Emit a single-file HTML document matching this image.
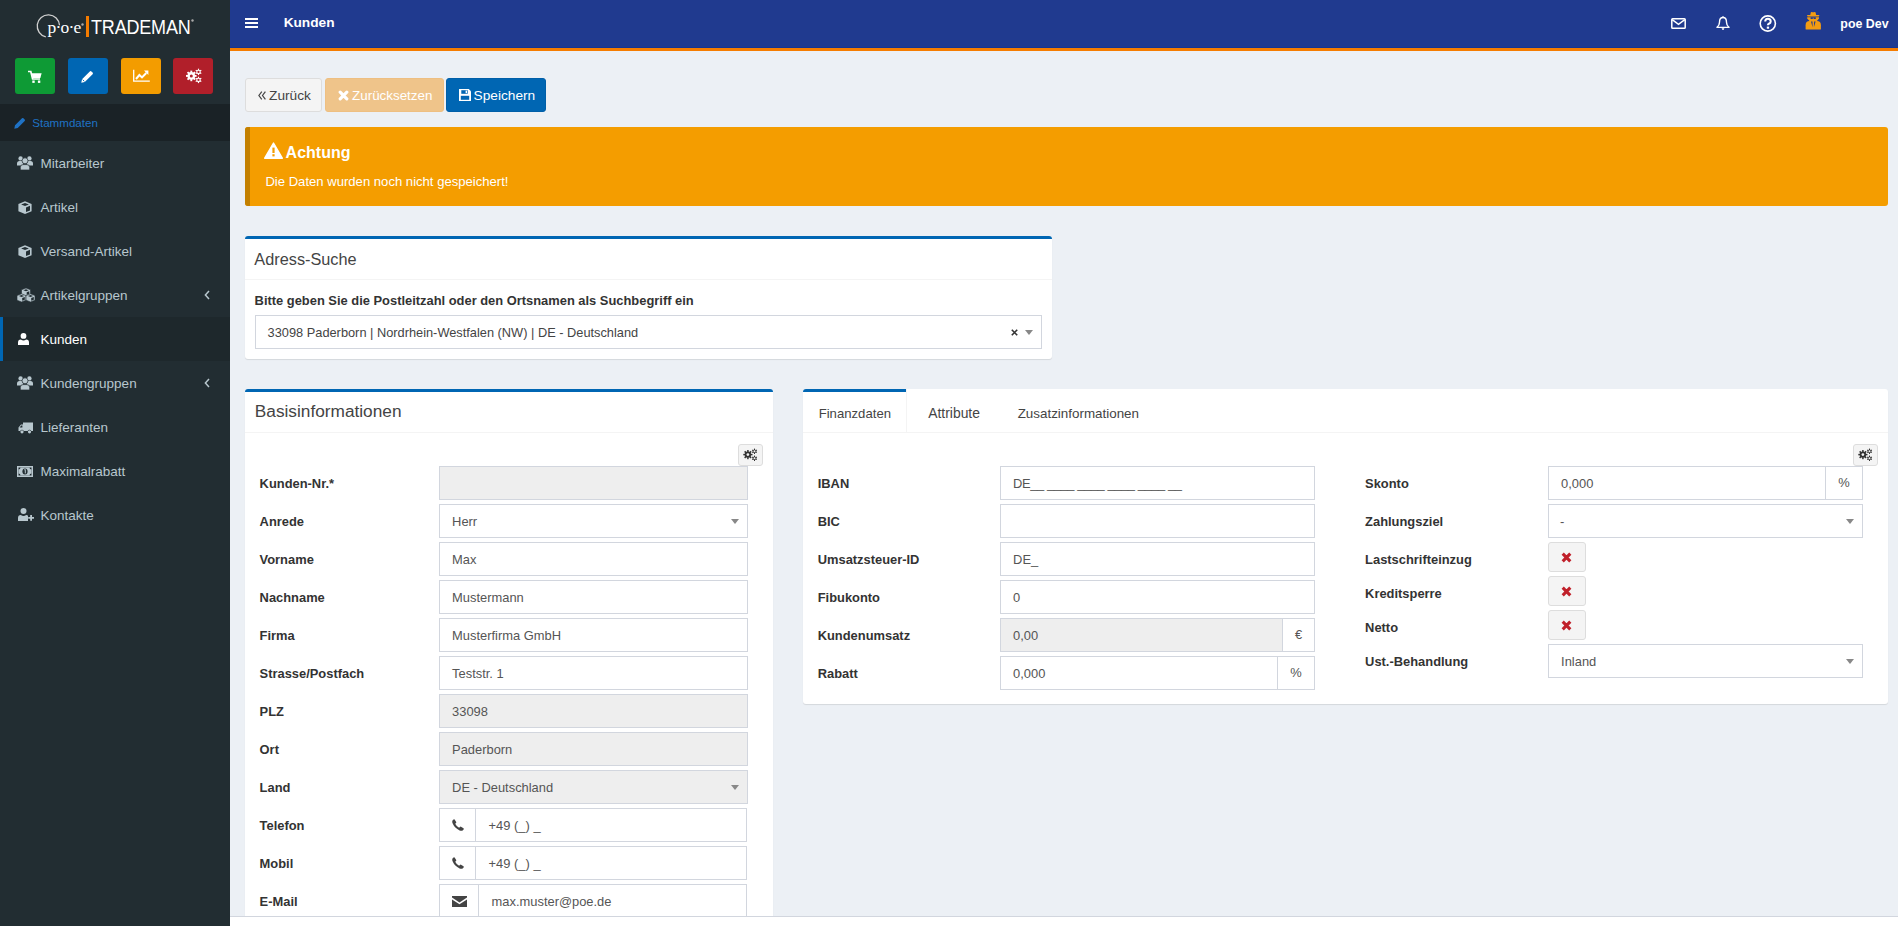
<!DOCTYPE html>
<html><head><meta charset="utf-8"><title>Kunden</title>
<style>
*{box-sizing:border-box;margin:0;padding:0}
html,body{width:1900px;height:926px;overflow:hidden;background:#fff;font-family:"Liberation Sans",sans-serif}
.abs{position:absolute}
.t{position:absolute;white-space:nowrap;line-height:1}
</style></head><body>
<div class="abs" style="left:0px;top:0px;width:230px;height:926px;background:#222d32"></div>
<svg class="abs" style="left:30px;top:8px" width="60" height="36" viewBox="0 0 60 36"><path d="M29.5 17.3 A11.15 11.15 0 1 0 15.8 28.8" fill="none" stroke="#d0d0d0" stroke-width="1.3"/></svg>
<div class="t" style="left:47.50px;top:19.19px;font-size:17.5px;color:#fff;font-weight:normal;font-family:'Liberation Serif',serif;letter-spacing:-0.8px">p·o·e</div>
<div class="abs" style="left:86px;top:16px;width:3px;height:21px;background:#f57c00"></div>
<div class="t" style="left:90.80px;top:16.77px;font-size:20px;color:#fff;font-weight:normal;transform:scaleX(0.9);transform-origin:0 0;letter-spacing:-0.2px">TRADEMAN</div>
<svg class="abs" style="left:191px;top:19px" width="3" height="3" viewBox="0 0 3 3"><circle cx="1.5" cy="1.5" r="1.2" fill="#aaa"/></svg>
<svg class="abs" style="left:81px;top:23px" width="3" height="3" viewBox="0 0 3 3"><circle cx="1.5" cy="1.5" r="1.2" fill="#aaa"/></svg>
<div class="abs" style="left:15px;top:58px;width:40px;height:36px;background:#0e9a35;border-radius:3px"></div>
<svg class="abs" style="left:28px;top:70px" width="14" height="14" viewBox="0 0 14 14"><path d="M0 1.5 H2.8 L4.6 9 H12" fill="none" stroke="#fff" stroke-width="1.7"/><path d="M3.6 3.2 H13.6 L12.4 8 H4.7Z" fill="#fff"/><rect x="4.3" y="10.5" width="2.4" height="2.4" fill="#fff"/><rect x="9.9" y="10.5" width="2.4" height="2.4" fill="#fff"/></svg>
<div class="abs" style="left:68px;top:58px;width:40px;height:36px;background:#0066b3;border-radius:3px"></div>
<svg class="abs" style="left:81px;top:70px" width="13" height="13" viewBox="0 0 13 13"><path d="M0.3 12.7 L1 9.2 L8.8 1.4 Q9.6 0.6 10.4 1.4 L11.6 2.6 Q12.4 3.4 11.6 4.2 L3.8 12Z" fill="#fff"/><path d="M1.6 9.6 L3.4 11.4" stroke="#0066b3" stroke-width="0.9"/></svg>
<div class="abs" style="left:121px;top:58px;width:40px;height:36px;background:#f39c00;border-radius:3px"></div>
<svg class="abs" style="left:133px;top:69px" width="17" height="14" viewBox="0 0 17 14"><path d="M0.7 0.8 V12.1 H16.8" fill="none" stroke="#fff" stroke-width="1.3"/><path d="M3 10 L6.4 6 L9 8.4 L13.3 4" fill="none" stroke="#fff" stroke-width="2"/><path d="M11 1.6 H15.4 V6Z" fill="#fff"/></svg>
<div class="abs" style="left:173px;top:58px;width:40px;height:36px;background:#b11f2a;border-radius:3px"></div>
<svg class="abs" style="left:184px;top:67px" width="19" height="17" viewBox="0 0 19 17"><circle cx="7.3" cy="8.9" r="3.8" fill="#fff"/><rect x="6.35" y="3.60" width="1.9" height="2.10" fill="#fff" transform="rotate(0.0 7.3 8.9)"/><rect x="6.35" y="3.60" width="1.9" height="2.10" fill="#fff" transform="rotate(45.0 7.3 8.9)"/><rect x="6.35" y="3.60" width="1.9" height="2.10" fill="#fff" transform="rotate(90.0 7.3 8.9)"/><rect x="6.35" y="3.60" width="1.9" height="2.10" fill="#fff" transform="rotate(135.0 7.3 8.9)"/><rect x="6.35" y="3.60" width="1.9" height="2.10" fill="#fff" transform="rotate(180.0 7.3 8.9)"/><rect x="6.35" y="3.60" width="1.9" height="2.10" fill="#fff" transform="rotate(225.0 7.3 8.9)"/><rect x="6.35" y="3.60" width="1.9" height="2.10" fill="#fff" transform="rotate(270.0 7.3 8.9)"/><rect x="6.35" y="3.60" width="1.9" height="2.10" fill="#fff" transform="rotate(315.0 7.3 8.9)"/><circle cx="7.3" cy="8.9" r="1.5" fill="#b11f2a"/><circle cx="14.5" cy="4.9" r="2.2" fill="#fff"/><rect x="13.90" y="1.70" width="1.2" height="1.60" fill="#fff" transform="rotate(0.0 14.5 4.9)"/><rect x="13.90" y="1.70" width="1.2" height="1.60" fill="#fff" transform="rotate(60.0 14.5 4.9)"/><rect x="13.90" y="1.70" width="1.2" height="1.60" fill="#fff" transform="rotate(120.0 14.5 4.9)"/><rect x="13.90" y="1.70" width="1.2" height="1.60" fill="#fff" transform="rotate(180.0 14.5 4.9)"/><rect x="13.90" y="1.70" width="1.2" height="1.60" fill="#fff" transform="rotate(240.0 14.5 4.9)"/><rect x="13.90" y="1.70" width="1.2" height="1.60" fill="#fff" transform="rotate(300.0 14.5 4.9)"/><circle cx="14.5" cy="4.9" r="1.15" fill="#b11f2a"/><circle cx="14.5" cy="12.9" r="2.2" fill="#fff"/><rect x="13.90" y="9.70" width="1.2" height="1.60" fill="#fff" transform="rotate(0.0 14.5 12.9)"/><rect x="13.90" y="9.70" width="1.2" height="1.60" fill="#fff" transform="rotate(60.0 14.5 12.9)"/><rect x="13.90" y="9.70" width="1.2" height="1.60" fill="#fff" transform="rotate(120.0 14.5 12.9)"/><rect x="13.90" y="9.70" width="1.2" height="1.60" fill="#fff" transform="rotate(180.0 14.5 12.9)"/><rect x="13.90" y="9.70" width="1.2" height="1.60" fill="#fff" transform="rotate(240.0 14.5 12.9)"/><rect x="13.90" y="9.70" width="1.2" height="1.60" fill="#fff" transform="rotate(300.0 14.5 12.9)"/><circle cx="14.5" cy="12.9" r="1.15" fill="#b11f2a"/></svg>
<div class="abs" style="left:0px;top:104px;width:230px;height:37px;background:#1a2226"></div>
<svg class="abs" style="left:14px;top:117px" width="12" height="12" viewBox="0 0 12 12"><path d="M0.3 11.7 L1 8.3 L8 1.3 Q8.7 0.6 9.4 1.3 L10.7 2.6 Q11.4 3.3 10.7 4 L3.7 11Z" fill="#1f72c4"/></svg>
<div class="t" style="left:32.19px;top:117.38px;font-size:11.6px;color:#1f72c4;font-weight:normal;">Stammdaten</div>
<div class="t" style="left:40.55px;top:157.37px;font-size:13.5px;color:#b8c7ce;font-weight:normal;">Mitarbeiter</div>
<div class="t" style="left:40.55px;top:201.37px;font-size:13.5px;color:#b8c7ce;font-weight:normal;">Artikel</div>
<div class="t" style="left:40.55px;top:245.37px;font-size:13.5px;color:#b8c7ce;font-weight:normal;">Versand-Artikel</div>
<div class="t" style="left:40.55px;top:289.37px;font-size:13.5px;color:#b8c7ce;font-weight:normal;">Artikelgruppen</div>
<div class="abs" style="left:0px;top:317px;width:230px;height:44px;background:#1e282c"></div>
<div class="abs" style="left:0px;top:317px;width:3px;height:44px;background:#0066b3"></div>
<div class="t" style="left:40.55px;top:333.37px;font-size:13.5px;color:#fff;font-weight:normal;">Kunden</div>
<div class="t" style="left:40.55px;top:377.37px;font-size:13.5px;color:#b8c7ce;font-weight:normal;">Kundengruppen</div>
<div class="t" style="left:40.55px;top:421.37px;font-size:13.5px;color:#b8c7ce;font-weight:normal;">Lieferanten</div>
<div class="t" style="left:40.55px;top:465.37px;font-size:13.5px;color:#b8c7ce;font-weight:normal;">Maximalrabatt</div>
<div class="t" style="left:40.55px;top:509.37px;font-size:13.5px;color:#b8c7ce;font-weight:normal;">Kontakte</div>
<svg class="abs" style="left:17px;top:156px" width="16" height="14" viewBox="0 0 16 14"><circle cx="3.6" cy="2.4" r="2.2" fill="#b8c7ce"/><circle cx="12.4" cy="2.4" r="2.2" fill="#b8c7ce"/><path d="M0 9.5 V7.5 Q0 5 2.5 5 H4.8 Q6 5 6 7 V9.5Z" fill="#b8c7ce"/><path d="M16 9.5 V7.5 Q16 5 13.5 5 H11.2 Q10 5 10 7 V9.5Z" fill="#b8c7ce"/><circle cx="8" cy="4.8" r="3" fill="#b8c7ce" stroke="#222d32" stroke-width="0.7"/><path d="M3.3 14 V11.5 Q3.3 8.6 6 8.6 H10 Q12.7 8.6 12.7 11.5 V14Z" fill="#b8c7ce" stroke="#222d32" stroke-width="0.7"/></svg>
<svg class="abs" style="left:18px;top:201px" width="14" height="13" viewBox="0 0 14 13"><path d="M7 0.2 L13.6 2.9 V10.2 L7 12.9 L0.4 10.2 V2.9Z" fill="#b8c7ce"/><path d="M7 1.9 L10.9 3.4 L7 4.9 L3.1 3.4Z" fill="#222d32"/><path d="M8 6.4 L12 4.8 V9.4 L8 11Z" fill="#222d32"/></svg>
<svg class="abs" style="left:18px;top:245px" width="14" height="13" viewBox="0 0 14 13"><path d="M7 0.2 L13.6 2.9 V10.2 L7 12.9 L0.4 10.2 V2.9Z" fill="#b8c7ce"/><path d="M7 1.9 L10.9 3.4 L7 4.9 L3.1 3.4Z" fill="#222d32"/><path d="M8 6.4 L12 4.8 V9.4 L8 11Z" fill="#222d32"/></svg>
<svg class="abs" style="left:17px;top:288px" width="18" height="14" viewBox="0 0 18 14"><path d="M9.0 0 L13.5 1.8 V6.4 L9.0 8.2 L4.5 6.4 V1.8Z" fill="#b8c7ce" stroke="#222d32" stroke-width="0.6"/><path d="M9.0 1.2 L11.6 2.2 L9.0 3.2 L6.4 2.2Z" fill="#222d32"/><path d="M9.7 4.3 L12.3 3.3 V6 L9.7 7Z" fill="#222d32"/><path d="M4.5 5.8 L9 7.6 V12.2 L4.5 14.0 L0 12.2 V7.6Z" fill="#b8c7ce" stroke="#222d32" stroke-width="0.6"/><path d="M4.5 7.0 L7.1 8.0 L4.5 9.0 L1.9 8.0Z" fill="#222d32"/><path d="M5.2 10.1 L7.8 9.1 V11.8 L5.2 12.8Z" fill="#222d32"/><path d="M13.5 5.8 L18 7.6 V12.2 L13.5 14.0 L9 12.2 V7.6Z" fill="#b8c7ce" stroke="#222d32" stroke-width="0.6"/><path d="M13.5 7.0 L16.1 8.0 L13.5 9.0 L10.9 8.0Z" fill="#222d32"/><path d="M14.2 10.1 L16.8 9.1 V11.8 L14.2 12.8Z" fill="#222d32"/></svg>
<svg class="abs" style="left:18px;top:333px" width="11" height="12" viewBox="0 0 11 12"><circle cx="5.5" cy="2.9" r="2.9" fill="#fff"/><path d="M0 12 V9.5 Q0 6.5 2.8 6.5 Q5.5 8.3 8.2 6.5 Q11 6.5 11 9.5 V12Z" fill="#fff"/></svg>
<svg class="abs" style="left:17px;top:376px" width="16" height="14" viewBox="0 0 16 14"><circle cx="3.6" cy="2.4" r="2.2" fill="#b8c7ce"/><circle cx="12.4" cy="2.4" r="2.2" fill="#b8c7ce"/><path d="M0 9.5 V7.5 Q0 5 2.5 5 H4.8 Q6 5 6 7 V9.5Z" fill="#b8c7ce"/><path d="M16 9.5 V7.5 Q16 5 13.5 5 H11.2 Q10 5 10 7 V9.5Z" fill="#b8c7ce"/><circle cx="8" cy="4.8" r="3" fill="#b8c7ce" stroke="#222d32" stroke-width="0.7"/><path d="M3.3 14 V11.5 Q3.3 8.6 6 8.6 H10 Q12.7 8.6 12.7 11.5 V14Z" fill="#b8c7ce" stroke="#222d32" stroke-width="0.7"/></svg>
<svg class="abs" style="left:18px;top:422px" width="15" height="12" viewBox="0 0 15 12"><path d="M5 0.5 H15 V9 H13.3 A2 2 0 0 0 9.7 9 H5.8 A2 2 0 0 0 2.2 9 H0.5 V5.5 L3 2.5 H5Z" fill="#b8c7ce"/><path d="M1.6 5.5 L3.3 3.5 H4.4 V5.5Z" fill="#222d32"/><circle cx="4" cy="9.8" r="1.6" fill="#b8c7ce"/><circle cx="11.5" cy="9.8" r="1.6" fill="#b8c7ce"/></svg>
<svg class="abs" style="left:17px;top:466px" width="16" height="11" viewBox="0 0 16 11"><rect x="0" y="0" width="16" height="11" fill="#b8c7ce"/><rect x="1.5" y="1.5" width="13" height="8" fill="#222d32"/><path d="M3.5 1.5 Q3.5 3.5 1.5 3.5 V7.5 Q3.5 7.5 3.5 9.5 H12.5 Q12.5 7.5 14.5 7.5 V3.5 Q12.5 3.5 12.5 1.5Z" fill="#b8c7ce"/><ellipse cx="8" cy="5.5" rx="2.6" ry="3" fill="#222d32"/><path d="M7.3 3.8 L8.3 3.5 V7.4" stroke="#b8c7ce" stroke-width="1" fill="none"/></svg>
<svg class="abs" style="left:18px;top:508px" width="16" height="13" viewBox="0 0 16 13"><circle cx="5.5" cy="3" r="3" fill="#b8c7ce"/><path d="M0 13 V10 Q0 7 2.8 7 Q5.5 8.8 8.2 7 Q9.5 7 10 7.8 V13Z" fill="#b8c7ce"/><path d="M10.2 9.8 H16 M13.1 6.9 V12.7" stroke="#b8c7ce" stroke-width="1.8"/></svg>
<svg class="abs" style="left:204px;top:290px" width="6" height="10" viewBox="0 0 6 10"><path d="M5 1 L1.4 5 L5 9" fill="none" stroke="#b8c7ce" stroke-width="1.5"/></svg>
<svg class="abs" style="left:204px;top:378px" width="6" height="10" viewBox="0 0 6 10"><path d="M5 1 L1.4 5 L5 9" fill="none" stroke="#b8c7ce" stroke-width="1.5"/></svg>
<div class="abs" style="left:230px;top:0px;width:1668px;height:926px;background:#ecf0f5"></div>
<div class="abs" style="left:230px;top:0px;width:1668px;height:48px;background:#203a8f"></div>
<div class="abs" style="left:230px;top:47px;width:1668px;height:1px;background:#163591"></div>
<div class="abs" style="left:230px;top:48px;width:1668px;height:3px;background:#f57c00"></div>
<svg class="abs" style="left:245px;top:18px" width="13" height="10" viewBox="0 0 13 10"><path d="M0 1 H13 M0 5 H13 M0 9 H13" stroke="#fff" stroke-width="2"/></svg>
<div class="t" style="left:283.64px;top:16.30px;font-size:13.7px;color:#fff;font-weight:bold;">Kunden</div>
<svg class="abs" style="left:1671px;top:18px" width="15" height="11" viewBox="0 0 15 11"><rect x="0.8" y="0.8" width="13.4" height="9.4" rx="0.8" fill="none" stroke="#fff" stroke-width="1.5"/><path d="M1.2 1.6 L7.5 6.4 L13.8 1.6" fill="none" stroke="#fff" stroke-width="1.4"/></svg>
<svg class="abs" style="left:1716px;top:16px" width="14" height="14" viewBox="0 0 14 14"><path d="M7 1.5 C4.2 1.5 3.5 3.8 3.5 6.2 C3.5 9 2.5 10.2 1 11.4 H13 C11.5 10.2 10.5 9 10.5 6.2 C10.5 3.8 9.8 1.5 7 1.5Z" fill="none" stroke="#fff" stroke-width="1.4" stroke-linejoin="round"/><circle cx="7" cy="1.2" r="1" fill="#fff"/><path d="M5.6 12.2 H8.4 Q8.2 14 7 14 Q5.8 14 5.6 12.2Z" fill="#fff"/></svg>
<svg class="abs" style="left:1759px;top:15px" width="18" height="17" viewBox="0 0 18 17"><circle cx="8.8" cy="8.5" r="7.6" fill="none" stroke="#fff" stroke-width="1.6"/><path d="M6.2 6.6 Q6.2 3.8 8.9 3.8 Q11.7 3.8 11.7 6.4 Q11.7 8 9.9 8.7 Q8.9 9.2 8.9 10.3" fill="none" stroke="#fff" stroke-width="2"/><rect x="7.8" y="11.6" width="2.3" height="2.1" fill="#fff"/></svg>
<svg class="abs" style="left:1800px;top:8px" width="26" height="26" viewBox="0 0 26 26"><path d="M10.2 7.2 L10.8 4.6 Q11 3.8 11.9 4 Q13.2 4.4 14.5 4 Q15.4 3.8 15.6 4.6 L16.2 7.2Z" fill="#f39c12"/><path d="M7 7.6 Q7 6.9 7.8 6.9 H18.6 Q19.4 6.9 19.4 7.6 Q19.4 8.4 18.6 8.4 H7.8 Q7 8.4 7 7.6Z" fill="#f39c12"/><path d="M7.2 9.2 H19 V10.4 Q18.4 11.6 17.2 12.4 V13.4 H9.2 V12.4 Q8 11.6 7.2 10.4Z" fill="#f39c12"/><path d="M10.6 9.3 H12.8 V10.9 H10.6Z M13.6 9.3 H15.8 V10.9 H13.6Z M12.6 9.5 H13.8 V9.9 H12.6Z" fill="#203a8f"/><path d="M5.6 21 V17.2 Q5.6 13 9.6 13 H16.9 Q20.9 13 20.9 17.2 V21 Q20.9 21.5 20.3 21.5 H6.2 Q5.6 21.5 5.6 21Z" fill="#f39c12"/><path d="M11 13.6 H12.5 L12.6 19.3Z M14.1 13.6 H15.6 L13.9 19.3Z" fill="#203a8f"/></svg>
<div class="t" style="left:1840.33px;top:18.40px;font-size:12.4px;color:#fff;font-weight:bold;">poe Dev</div>
<div class="abs" style="left:245px;top:78px;width:77px;height:34px;background:#f4f4f4;border:1px solid #ddd;border-radius:3px"></div>
<svg class="abs" style="left:258px;top:91px" width="8" height="9" viewBox="0 0 8 9"><path d="M3.8 0.6 L0.9 4.5 L3.8 8.4 M7.4 0.6 L4.5 4.5 L7.4 8.4" fill="none" stroke="#444" stroke-width="1.2"/></svg>
<div class="t" style="left:269.04px;top:88.80px;font-size:13.7px;color:#444;font-weight:normal;">Zurück</div>
<div class="abs" style="left:325px;top:78px;width:119px;height:34px;background:#efc48a;border:1px solid #eebf82;border-radius:3px"></div>
<svg class="abs" style="left:338px;top:90px" width="11" height="11" viewBox="0 0 11 11"><path d="M2.2 2.2 L8.8 8.8 M8.8 2.2 L2.2 8.8" stroke="#fff" stroke-width="3.2" stroke-linecap="round"/></svg>
<div class="t" style="left:352.06px;top:89.06px;font-size:13.4px;color:#fff;font-weight:normal;">Zurücksetzen</div>
<div class="abs" style="left:446px;top:78px;width:100px;height:34px;background:#0066b3;border:1px solid #005fa8;border-radius:3px"></div>
<svg class="abs" style="left:459px;top:89px" width="12" height="12" viewBox="0 0 12 12"><path d="M0 0 H9.8 L12 2.2 V12 H0Z" fill="#fff"/><rect x="2.3" y="1.2" width="6.4" height="3.6" fill="#0066b3"/><rect x="6.6" y="1.6" width="1.4" height="2.6" fill="#fff"/><rect x="1.8" y="6.8" width="8.4" height="4" fill="#0066b3"/></svg>
<div class="t" style="left:473.54px;top:88.80px;font-size:13.7px;color:#fff;font-weight:normal;">Speichern</div>
<div class="abs" style="left:245px;top:127px;width:1643px;height:79px;background:#f49d00;border-radius:3px"></div>
<div class="abs" style="left:245px;top:127px;width:5px;height:79px;background:#c38000;border-radius:3px 0 0 3px"></div>
<svg class="abs" style="left:264px;top:142px" width="19" height="17" viewBox="0 0 19 17"><path d="M9.5 1 L18.3 16.2 H0.7Z" fill="#fff" stroke="#fff" stroke-width="1.4" stroke-linejoin="round"/><rect x="8.4" y="5.6" width="2.2" height="5.4" fill="#f49d00"/><rect x="8.4" y="12.2" width="2.2" height="2.2" fill="#f49d00"/></svg>
<div class="t" style="left:285.58px;top:145.26px;font-size:16.0px;color:#fff;font-weight:bold;">Achtung</div>
<div class="t" style="left:265.38px;top:175.01px;font-size:13.1px;color:#fff;font-weight:normal;">Die Daten wurden noch nicht gespeichert!</div>
<div class="abs" style="left:245px;top:236px;width:807px;height:123px;background:#fff;border-radius:3px;box-shadow:0 1px 1px rgba(0,0,0,0.1)"></div>
<div class="abs" style="left:245px;top:236px;width:807px;height:3px;background:#0066b3;border-radius:3px 3px 0 0"></div>
<div class="abs" style="left:245px;top:279px;width:807px;height:1px;background:#f4f4f4"></div>
<div class="t" style="left:254.36px;top:250.90px;font-size:16.3px;color:#444;font-weight:normal;">Adress-Suche</div>
<div class="t" style="left:254.60px;top:294.68px;font-size:12.9px;color:#333;font-weight:bold;">Bitte geben Sie die Postleitzahl oder den Ortsnamen als Suchbegriff ein</div>
<div class="abs" style="left:255px;top:315px;width:787px;height:34px;background:#fff;border:1px solid #d2d6de"></div>
<div class="t" style="left:267.60px;top:326.76px;font-size:12.8px;color:#444;font-weight:normal;">33098 Paderborn | Nordrhein-Westfalen (NW) | DE - Deutschland</div>
<svg class="abs" style="left:1011px;top:329px" width="7" height="7" viewBox="0 0 7 7"><path d="M0.8 0.8 L6.2 6.2 M6.2 0.8 L0.8 6.2" stroke="#333" stroke-width="1.6"/></svg>
<svg class="abs" style="left:1025px;top:330px" width="8" height="5" viewBox="0 0 8 5"><path d="M0 0 H8 L4 5Z" fill="#888"/></svg>
<div class="abs" style="left:245px;top:389px;width:528px;height:560px;background:#fff;border-radius:3px;box-shadow:0 1px 1px rgba(0,0,0,0.1)"></div>
<div class="abs" style="left:245px;top:389px;width:528px;height:3px;background:#0066b3;border-radius:3px 3px 0 0"></div>
<div class="abs" style="left:245px;top:432px;width:528px;height:1px;background:#f4f4f4"></div>
<div class="t" style="left:254.79px;top:402.90px;font-size:17.25px;color:#444;font-weight:normal;">Basisinformationen</div>
<div class="abs" style="left:738px;top:444px;width:25px;height:22px;background:#f4f4f4;border:1px solid #ddd;border-radius:3px"></div>
<svg class="abs" style="left:741px;top:444px" width="18" height="20" viewBox="0 0 18 20"><circle cx="6.9" cy="10.6" r="3.2" fill="#333"/><rect x="6.15" y="6.00" width="1.5" height="2.00" fill="#333" transform="rotate(0.0 6.9 10.6)"/><rect x="6.15" y="6.00" width="1.5" height="2.00" fill="#333" transform="rotate(45.0 6.9 10.6)"/><rect x="6.15" y="6.00" width="1.5" height="2.00" fill="#333" transform="rotate(90.0 6.9 10.6)"/><rect x="6.15" y="6.00" width="1.5" height="2.00" fill="#333" transform="rotate(135.0 6.9 10.6)"/><rect x="6.15" y="6.00" width="1.5" height="2.00" fill="#333" transform="rotate(180.0 6.9 10.6)"/><rect x="6.15" y="6.00" width="1.5" height="2.00" fill="#333" transform="rotate(225.0 6.9 10.6)"/><rect x="6.15" y="6.00" width="1.5" height="2.00" fill="#333" transform="rotate(270.0 6.9 10.6)"/><rect x="6.15" y="6.00" width="1.5" height="2.00" fill="#333" transform="rotate(315.0 6.9 10.6)"/><circle cx="6.9" cy="10.6" r="1.35" fill="#f4f4f4"/><circle cx="13.5" cy="7.3" r="1.8" fill="#333"/><rect x="13.00" y="4.60" width="1.0" height="1.50" fill="#333" transform="rotate(0.0 13.5 7.3)"/><rect x="13.00" y="4.60" width="1.0" height="1.50" fill="#333" transform="rotate(60.0 13.5 7.3)"/><rect x="13.00" y="4.60" width="1.0" height="1.50" fill="#333" transform="rotate(120.0 13.5 7.3)"/><rect x="13.00" y="4.60" width="1.0" height="1.50" fill="#333" transform="rotate(180.0 13.5 7.3)"/><rect x="13.00" y="4.60" width="1.0" height="1.50" fill="#333" transform="rotate(240.0 13.5 7.3)"/><rect x="13.00" y="4.60" width="1.0" height="1.50" fill="#333" transform="rotate(300.0 13.5 7.3)"/><circle cx="13.5" cy="7.3" r="1.05" fill="#f4f4f4"/><circle cx="13.5" cy="14.3" r="1.8" fill="#333"/><rect x="13.00" y="11.60" width="1.0" height="1.50" fill="#333" transform="rotate(0.0 13.5 14.3)"/><rect x="13.00" y="11.60" width="1.0" height="1.50" fill="#333" transform="rotate(60.0 13.5 14.3)"/><rect x="13.00" y="11.60" width="1.0" height="1.50" fill="#333" transform="rotate(120.0 13.5 14.3)"/><rect x="13.00" y="11.60" width="1.0" height="1.50" fill="#333" transform="rotate(180.0 13.5 14.3)"/><rect x="13.00" y="11.60" width="1.0" height="1.50" fill="#333" transform="rotate(240.0 13.5 14.3)"/><rect x="13.00" y="11.60" width="1.0" height="1.50" fill="#333" transform="rotate(300.0 13.5 14.3)"/><circle cx="13.5" cy="14.3" r="1.05" fill="#f4f4f4"/></svg>
<div class="t" style="left:259.60px;top:477.88px;font-size:12.9px;color:#333;font-weight:bold;">Kunden-Nr.*</div>
<div class="t" style="left:259.60px;top:515.88px;font-size:12.9px;color:#333;font-weight:bold;">Anrede</div>
<div class="t" style="left:259.60px;top:553.88px;font-size:12.9px;color:#333;font-weight:bold;">Vorname</div>
<div class="t" style="left:259.60px;top:591.88px;font-size:12.9px;color:#333;font-weight:bold;">Nachname</div>
<div class="t" style="left:259.60px;top:629.88px;font-size:12.9px;color:#333;font-weight:bold;">Firma</div>
<div class="t" style="left:259.60px;top:667.88px;font-size:12.9px;color:#333;font-weight:bold;">Strasse/Postfach</div>
<div class="t" style="left:259.60px;top:705.88px;font-size:12.9px;color:#333;font-weight:bold;">PLZ</div>
<div class="t" style="left:259.60px;top:743.88px;font-size:12.9px;color:#333;font-weight:bold;">Ort</div>
<div class="t" style="left:259.60px;top:781.88px;font-size:12.9px;color:#333;font-weight:bold;">Land</div>
<div class="t" style="left:259.60px;top:819.88px;font-size:12.9px;color:#333;font-weight:bold;">Telefon</div>
<div class="t" style="left:259.60px;top:857.88px;font-size:12.9px;color:#333;font-weight:bold;">Mobil</div>
<div class="t" style="left:259.60px;top:895.88px;font-size:12.9px;color:#333;font-weight:bold;">E-Mail</div>
<div class="abs" style="left:439px;top:466px;width:309px;height:34px;background:#eee;border:1px solid #d2d6de"></div>
<div class="abs" style="left:439px;top:504px;width:309px;height:34px;background:#fff;border:1px solid #d2d6de"></div>
<div class="t" style="left:452.10px;top:515.88px;font-size:12.9px;color:#555;font-weight:normal;">Herr</div>
<svg class="abs" style="left:731px;top:519px" width="8" height="5" viewBox="0 0 8 5"><path d="M0 0 H8 L4 5Z" fill="#888"/></svg>
<div class="abs" style="left:439px;top:542px;width:309px;height:34px;background:#fff;border:1px solid #d2d6de"></div>
<div class="t" style="left:452.10px;top:553.88px;font-size:12.9px;color:#555;font-weight:normal;">Max</div>
<div class="abs" style="left:439px;top:580px;width:309px;height:34px;background:#fff;border:1px solid #d2d6de"></div>
<div class="t" style="left:452.10px;top:591.88px;font-size:12.9px;color:#555;font-weight:normal;">Mustermann</div>
<div class="abs" style="left:439px;top:618px;width:309px;height:34px;background:#fff;border:1px solid #d2d6de"></div>
<div class="t" style="left:452.10px;top:629.88px;font-size:12.9px;color:#555;font-weight:normal;">Musterfirma GmbH</div>
<div class="abs" style="left:439px;top:656px;width:309px;height:34px;background:#fff;border:1px solid #d2d6de"></div>
<div class="t" style="left:452.10px;top:667.88px;font-size:12.9px;color:#555;font-weight:normal;">Teststr. 1</div>
<div class="abs" style="left:439px;top:694px;width:309px;height:34px;background:#eee;border:1px solid #d2d6de"></div>
<div class="t" style="left:452.10px;top:705.88px;font-size:12.9px;color:#555;font-weight:normal;">33098</div>
<div class="abs" style="left:439px;top:732px;width:309px;height:34px;background:#eee;border:1px solid #d2d6de"></div>
<div class="t" style="left:452.10px;top:743.88px;font-size:12.9px;color:#555;font-weight:normal;">Paderborn</div>
<div class="abs" style="left:439px;top:770px;width:309px;height:34px;background:#eee;border:1px solid #d2d6de"></div>
<div class="t" style="left:452.10px;top:781.88px;font-size:12.9px;color:#555;font-weight:normal;">DE - Deutschland</div>
<svg class="abs" style="left:731px;top:785px" width="8" height="5" viewBox="0 0 8 5"><path d="M0 0 H8 L4 5Z" fill="#888"/></svg>
<div class="abs" style="left:439px;top:808px;width:37px;height:34px;background:#fff;border:1px solid #d2d6de"></div>
<div class="abs" style="left:475px;top:808px;width:272px;height:34px;background:#fff;border:1px solid #d2d6de"></div>
<svg class="abs" style="left:452px;top:819px" width="12" height="12" viewBox="0 0 12 12"><path d="M2.6 0.4 L4.2 2.9 Q4.5 3.5 4 4 L3.2 4.8 Q4.4 7.4 7.1 8.7 L7.9 7.9 Q8.4 7.4 9 7.7 L11.5 9.3 Q12 9.8 11.6 10.4 L10.6 11.4 Q9.6 12.2 7.6 11.4 Q2.6 9.2 0.7 4.6 Q-0.1 2.6 0.5 1.6 L1.5 0.6 Q2 0 2.6 0.4Z" fill="#444"/></svg>
<div class="t" style="left:488.60px;top:819.88px;font-size:12.9px;color:#555;font-weight:normal;">+49 (_) _</div>
<div class="abs" style="left:439px;top:846px;width:37px;height:34px;background:#fff;border:1px solid #d2d6de"></div>
<div class="abs" style="left:475px;top:846px;width:272px;height:34px;background:#fff;border:1px solid #d2d6de"></div>
<svg class="abs" style="left:452px;top:857px" width="12" height="12" viewBox="0 0 12 12"><path d="M2.6 0.4 L4.2 2.9 Q4.5 3.5 4 4 L3.2 4.8 Q4.4 7.4 7.1 8.7 L7.9 7.9 Q8.4 7.4 9 7.7 L11.5 9.3 Q12 9.8 11.6 10.4 L10.6 11.4 Q9.6 12.2 7.6 11.4 Q2.6 9.2 0.7 4.6 Q-0.1 2.6 0.5 1.6 L1.5 0.6 Q2 0 2.6 0.4Z" fill="#444"/></svg>
<div class="t" style="left:488.60px;top:857.88px;font-size:12.9px;color:#555;font-weight:normal;">+49 (_) _</div>
<div class="abs" style="left:439px;top:884px;width:40px;height:34px;background:#fff;border:1px solid #d2d6de"></div>
<div class="abs" style="left:478px;top:884px;width:269px;height:34px;background:#fff;border:1px solid #d2d6de"></div>
<svg class="abs" style="left:452px;top:896px" width="15" height="11" viewBox="0 0 15 11"><path d="M0 0 H15 V1.6 L7.5 6.4 L0 1.6Z" fill="#444"/><path d="M0 3.4 L7.5 8.2 L15 3.4 V11 H0Z" fill="#444"/></svg>
<div class="t" style="left:491.60px;top:895.88px;font-size:12.9px;color:#555;font-weight:normal;">max.muster@poe.de</div>
<div class="abs" style="left:803px;top:389px;width:1085px;height:315px;background:#fff;border-radius:3px;box-shadow:0 1px 1px rgba(0,0,0,0.1)"></div>
<div class="abs" style="left:803px;top:432px;width:1085px;height:1px;background:#f4f4f4"></div>
<div class="abs" style="left:803px;top:389px;width:104px;height:3px;background:#0066b3;border-radius:3px 0 0 0"></div>
<div class="abs" style="left:906px;top:389px;width:1px;height:44px;background:#f4f4f4"></div>
<div class="t" style="left:818.68px;top:407.17px;font-size:13.15px;color:#444;font-weight:normal;">Finanzdaten</div>
<div class="t" style="left:928.23px;top:406.53px;font-size:13.9px;color:#444;font-weight:normal;">Attribute</div>
<div class="t" style="left:1017.66px;top:406.96px;font-size:13.4px;color:#444;font-weight:normal;">Zusatzinformationen</div>
<div class="abs" style="left:1853px;top:444px;width:25px;height:22px;background:#f4f4f4;border:1px solid #ddd;border-radius:3px"></div>
<svg class="abs" style="left:1856px;top:444px" width="18" height="20" viewBox="0 0 18 20"><circle cx="6.9" cy="10.6" r="3.2" fill="#333"/><rect x="6.15" y="6.00" width="1.5" height="2.00" fill="#333" transform="rotate(0.0 6.9 10.6)"/><rect x="6.15" y="6.00" width="1.5" height="2.00" fill="#333" transform="rotate(45.0 6.9 10.6)"/><rect x="6.15" y="6.00" width="1.5" height="2.00" fill="#333" transform="rotate(90.0 6.9 10.6)"/><rect x="6.15" y="6.00" width="1.5" height="2.00" fill="#333" transform="rotate(135.0 6.9 10.6)"/><rect x="6.15" y="6.00" width="1.5" height="2.00" fill="#333" transform="rotate(180.0 6.9 10.6)"/><rect x="6.15" y="6.00" width="1.5" height="2.00" fill="#333" transform="rotate(225.0 6.9 10.6)"/><rect x="6.15" y="6.00" width="1.5" height="2.00" fill="#333" transform="rotate(270.0 6.9 10.6)"/><rect x="6.15" y="6.00" width="1.5" height="2.00" fill="#333" transform="rotate(315.0 6.9 10.6)"/><circle cx="6.9" cy="10.6" r="1.35" fill="#f4f4f4"/><circle cx="13.5" cy="7.3" r="1.8" fill="#333"/><rect x="13.00" y="4.60" width="1.0" height="1.50" fill="#333" transform="rotate(0.0 13.5 7.3)"/><rect x="13.00" y="4.60" width="1.0" height="1.50" fill="#333" transform="rotate(60.0 13.5 7.3)"/><rect x="13.00" y="4.60" width="1.0" height="1.50" fill="#333" transform="rotate(120.0 13.5 7.3)"/><rect x="13.00" y="4.60" width="1.0" height="1.50" fill="#333" transform="rotate(180.0 13.5 7.3)"/><rect x="13.00" y="4.60" width="1.0" height="1.50" fill="#333" transform="rotate(240.0 13.5 7.3)"/><rect x="13.00" y="4.60" width="1.0" height="1.50" fill="#333" transform="rotate(300.0 13.5 7.3)"/><circle cx="13.5" cy="7.3" r="1.05" fill="#f4f4f4"/><circle cx="13.5" cy="14.3" r="1.8" fill="#333"/><rect x="13.00" y="11.60" width="1.0" height="1.50" fill="#333" transform="rotate(0.0 13.5 14.3)"/><rect x="13.00" y="11.60" width="1.0" height="1.50" fill="#333" transform="rotate(60.0 13.5 14.3)"/><rect x="13.00" y="11.60" width="1.0" height="1.50" fill="#333" transform="rotate(120.0 13.5 14.3)"/><rect x="13.00" y="11.60" width="1.0" height="1.50" fill="#333" transform="rotate(180.0 13.5 14.3)"/><rect x="13.00" y="11.60" width="1.0" height="1.50" fill="#333" transform="rotate(240.0 13.5 14.3)"/><rect x="13.00" y="11.60" width="1.0" height="1.50" fill="#333" transform="rotate(300.0 13.5 14.3)"/><circle cx="13.5" cy="14.3" r="1.05" fill="#f4f4f4"/></svg>
<div class="t" style="left:817.70px;top:477.88px;font-size:12.9px;color:#333;font-weight:bold;">IBAN</div>
<div class="t" style="left:817.70px;top:515.88px;font-size:12.9px;color:#333;font-weight:bold;">BIC</div>
<div class="t" style="left:817.70px;top:553.88px;font-size:12.9px;color:#333;font-weight:bold;">Umsatzsteuer-ID</div>
<div class="t" style="left:817.70px;top:591.88px;font-size:12.9px;color:#333;font-weight:bold;">Fibukonto</div>
<div class="t" style="left:817.70px;top:629.88px;font-size:12.9px;color:#333;font-weight:bold;">Kundenumsatz</div>
<div class="t" style="left:817.70px;top:667.88px;font-size:12.9px;color:#333;font-weight:bold;">Rabatt</div>
<div class="abs" style="left:1000px;top:466px;width:315px;height:34px;background:#fff;border:1px solid #d2d6de"></div>
<div class="t" style="left:1013.10px;top:477.88px;font-size:12.9px;color:#555;font-weight:normal;letter-spacing:-0.4px">DE__ ____ ____ ____ ____ __</div>
<div class="abs" style="left:1000px;top:504px;width:315px;height:34px;background:#fff;border:1px solid #d2d6de"></div>
<div class="abs" style="left:1000px;top:542px;width:315px;height:34px;background:#fff;border:1px solid #d2d6de"></div>
<div class="t" style="left:1013.10px;top:553.88px;font-size:12.9px;color:#555;font-weight:normal;">DE_</div>
<div class="abs" style="left:1000px;top:580px;width:315px;height:34px;background:#fff;border:1px solid #d2d6de"></div>
<div class="t" style="left:1013.10px;top:591.88px;font-size:12.9px;color:#555;font-weight:normal;">0</div>
<div class="abs" style="left:1000px;top:618px;width:283px;height:34px;background:#eee;border:1px solid #d2d6de"></div>
<div class="abs" style="left:1282px;top:618px;width:33px;height:34px;background:#fff;border:1px solid #d2d6de"></div>
<div class="t" style="left:1013.10px;top:629.88px;font-size:12.9px;color:#555;font-weight:normal;">0,00</div>
<div class="t" style="left:1282px;top:628.88px;width:33px;text-align:center;font-size:12.9px;color:#555">€</div>
<div class="abs" style="left:1000px;top:656px;width:278px;height:34px;background:#fff;border:1px solid #d2d6de"></div>
<div class="abs" style="left:1277px;top:656px;width:38px;height:34px;background:#fff;border:1px solid #d2d6de"></div>
<div class="t" style="left:1013.10px;top:667.88px;font-size:12.9px;color:#555;font-weight:normal;">0,000</div>
<div class="t" style="left:1277px;top:666.88px;width:38px;text-align:center;font-size:12.9px;color:#555">%</div>
<div class="t" style="left:1365.10px;top:477.88px;font-size:12.9px;color:#333;font-weight:bold;">Skonto</div>
<div class="t" style="left:1365.10px;top:515.88px;font-size:12.9px;color:#333;font-weight:bold;">Zahlungsziel</div>
<div class="t" style="left:1365.10px;top:553.88px;font-size:12.9px;color:#333;font-weight:bold;">Lastschrifteinzug</div>
<div class="t" style="left:1365.10px;top:587.88px;font-size:12.9px;color:#333;font-weight:bold;">Kreditsperre</div>
<div class="t" style="left:1365.10px;top:621.88px;font-size:12.9px;color:#333;font-weight:bold;">Netto</div>
<div class="t" style="left:1365.10px;top:655.88px;font-size:12.9px;color:#333;font-weight:bold;">Ust.-Behandlung</div>
<div class="abs" style="left:1548px;top:466px;width:278px;height:34px;background:#fff;border:1px solid #d2d6de"></div>
<div class="abs" style="left:1825px;top:466px;width:38px;height:34px;background:#fff;border:1px solid #d2d6de"></div>
<div class="t" style="left:1561.10px;top:477.88px;font-size:12.9px;color:#555;font-weight:normal;">0,000</div>
<div class="t" style="left:1825px;top:476.88px;width:38px;text-align:center;font-size:12.9px;color:#555">%</div>
<div class="abs" style="left:1548px;top:504px;width:315px;height:34px;background:#fff;border:1px solid #d2d6de"></div>
<div class="t" style="left:1560.10px;top:515.88px;font-size:12.9px;color:#555;font-weight:normal;">-</div>
<svg class="abs" style="left:1846px;top:519px" width="8" height="5" viewBox="0 0 8 5"><path d="M0 0 H8 L4 5Z" fill="#888"/></svg>
<div class="abs" style="left:1548px;top:542px;width:38px;height:30px;background:#f4f4f4;border:1px solid #ddd;border-radius:3px"></div>
<svg class="abs" style="left:1561px;top:551.5px" width="11" height="11" viewBox="0 0 11 11"><path d="M1.7 1.7 L9.3 9.3 M9.3 1.7 L1.7 9.3" stroke="#c0202a" stroke-width="3.1"/></svg>
<div class="abs" style="left:1548px;top:576px;width:38px;height:30px;background:#f4f4f4;border:1px solid #ddd;border-radius:3px"></div>
<svg class="abs" style="left:1561px;top:585.5px" width="11" height="11" viewBox="0 0 11 11"><path d="M1.7 1.7 L9.3 9.3 M9.3 1.7 L1.7 9.3" stroke="#c0202a" stroke-width="3.1"/></svg>
<div class="abs" style="left:1548px;top:610px;width:38px;height:30px;background:#f4f4f4;border:1px solid #ddd;border-radius:3px"></div>
<svg class="abs" style="left:1561px;top:619.5px" width="11" height="11" viewBox="0 0 11 11"><path d="M1.7 1.7 L9.3 9.3 M9.3 1.7 L1.7 9.3" stroke="#c0202a" stroke-width="3.1"/></svg>
<div class="abs" style="left:1548px;top:644px;width:315px;height:34px;background:#fff;border:1px solid #d2d6de"></div>
<div class="t" style="left:1561.10px;top:655.88px;font-size:12.9px;color:#555;font-weight:normal;">Inland</div>
<svg class="abs" style="left:1846px;top:659px" width="8" height="5" viewBox="0 0 8 5"><path d="M0 0 H8 L4 5Z" fill="#888"/></svg>
<div class="abs" style="left:230px;top:916px;width:1668px;height:10px;background:#fff;border-top:1px solid #d2d6de"></div>
</body></html>
